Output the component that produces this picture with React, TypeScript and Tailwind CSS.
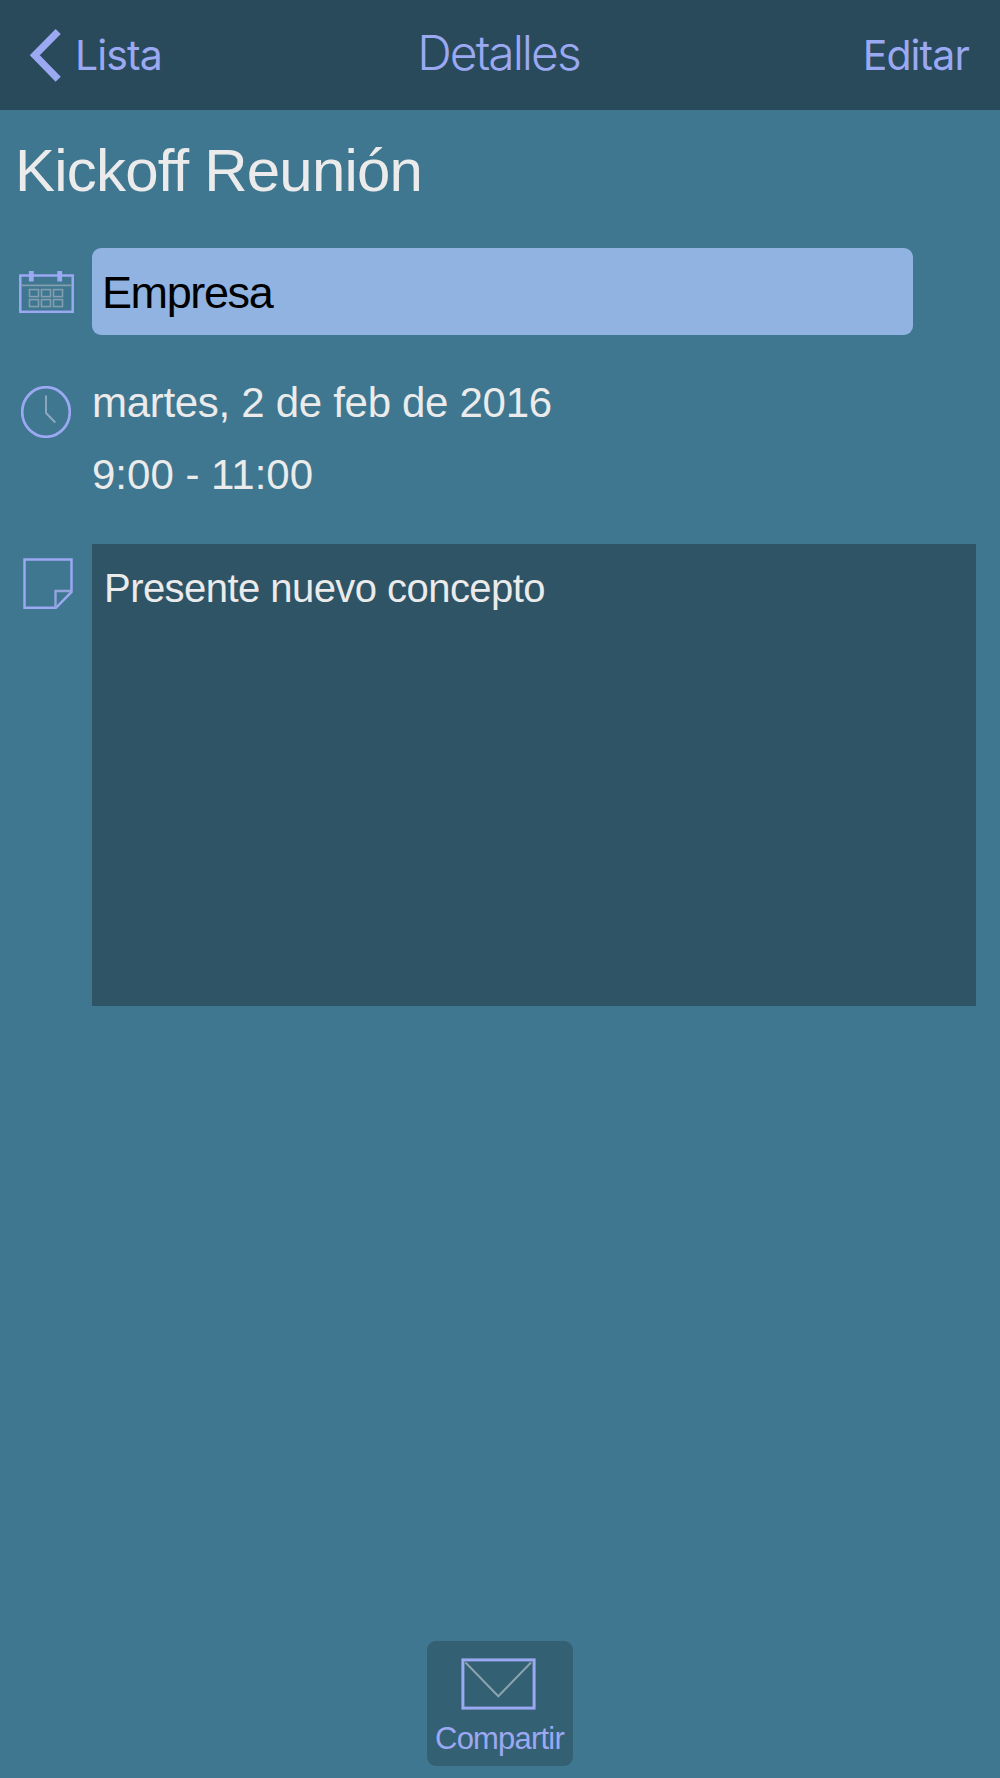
import type { ReactNode } from 'react';

const ICON_COLOR = '#9ba8f2';
const THIN_COLOR = '#819fae';

function BackIcon() {
    return (
        <svg width="31" height="53" viewBox="0 0 31 53" fill="none">
            <path d="M28.2 2.5 4.8 26.3 28.2 50.2" stroke={ICON_COLOR} strokeWidth="7.2" />
        </svg>
    );
}

function CalendarIcon() {
    return (
        <svg width="55" height="43" viewBox="0 0 55 43" fill="none">
            <rect x="1.3" y="4.5" width="52.4" height="36.3" stroke={ICON_COLOR} strokeWidth="2.5" />
            <path d="M2.5 14.3H52.5" stroke={THIN_COLOR} strokeWidth="1.8" />
            <path d="M12.3 0V10.5M40.7 0V10.5" stroke={ICON_COLOR} strokeWidth="4.8" />
            {[10.5, 22.5, 34.5].map((x) => (
                <g key={x} stroke={THIN_COLOR} strokeWidth="1.6">
                    <rect x={x} y="18.6" width="9" height="7" />
                    <rect x={x} y="28.6" width="9" height="7" />
                </g>
            ))}
        </svg>
    );
}

function ClockIcon() {
    return (
        <svg width="50" height="52" viewBox="0 0 50 52" fill="none">
            <ellipse cx="25" cy="26" rx="23.8" ry="24.8" stroke={ICON_COLOR} strokeWidth="2.7" />
            <path d="M25 9.5V27L34.3 36.5" stroke="#8fa9c2" strokeWidth="1.9" />
        </svg>
    );
}

function NoteIcon() {
    return (
        <svg width="50" height="52" viewBox="0 0 50 52" fill="none" stroke={ICON_COLOR} strokeWidth="2.5">
            <path d="M1.5 1.5H48.5V34L33 49.8H1.5Z" />
            <path d="M48.5 33H32.5V49.8" stroke="#93a5dd" strokeWidth="2.4" />
        </svg>
    );
}

function MailIcon() {
    return (
        <svg width="75" height="52" viewBox="0 0 75 52" fill="none">
            <path d="M4.5 4.5 37.3 38.3 70 4.5" stroke="#8ba4ae" strokeWidth="2" />
            <rect x="1.9" y="1.9" width="71.2" height="48.2" stroke={ICON_COLOR} strokeWidth="3" />
        </svg>
    );
}

function Row({ icon, children }: { icon: ReactNode; children: ReactNode }) {
    return (
        <div className="flex items-start">
            <div className="flex w-[92px] shrink-0">{icon}</div>
            {children}
        </div>
    );
}

export default function App() {
    return (
        <div className="flex h-[1778px] w-[1000px] flex-col bg-[#3f7690] font-['Liberation_Sans',sans-serif] text-[#ebebeb]">
            <header className="grid h-[110px] shrink-0 grid-cols-3 items-center bg-[#284a5a] px-[30px] text-[#9ba8f2]">
                <button className="flex items-center gap-[14px] font-['Inter',sans-serif] text-[41px] leading-none tracking-[-0.9px]">
                    <BackIcon />
                    <span>Lista</span>
                </button>
                <h1 className="pr-[3px] pb-[5px] text-center font-['Inter',sans-serif] text-[48px] leading-none font-light tracking-[-2px]">
                    Detalles
                </h1>
                <button className="pr-px text-right font-['Inter',sans-serif] text-[41px] leading-none tracking-[-0.9px]">
                    Editar
                </button>
            </header>

            <main className="flex flex-1 flex-col">
                <h2 className="mt-[27px] pl-[15px] text-[60px] leading-[68px] tracking-[-0.8px] whitespace-nowrap">
                    Kickoff Reunión
                </h2>

                <div className="mt-[43px]">
                    <Row icon={<div className="mt-[23px] ml-[19px]"><CalendarIcon /></div>}>
                        <div className="flex h-[87px] w-[821px] items-center rounded-[9px] bg-[#90b3e1] pt-[2px] pl-[10px] text-[45px] leading-none tracking-[-1.4px] text-black">
                            Empresa
                        </div>
                    </Row>
                </div>

                <div className="mt-[32px]">
                    <Row icon={<div className="mt-[19px] ml-[21px]"><ClockIcon /></div>}>
                        <div className="text-[42px] leading-[72px] whitespace-nowrap">
                            <p className="tracking-[-0.3px]">martes, 2 de feb de 2016</p>
                            <p>9:00 - 11:00</p>
                        </div>
                    </Row>
                </div>

                <div className="mt-[33px]">
                    <Row icon={<div className="mt-[14px] ml-[23px]"><NoteIcon /></div>}>
                        <div className="h-[462px] w-[884px] bg-[#2e5466] pt-[21px] pl-[12px] text-[40px] leading-[46px] tracking-[-0.55px]">
                            Presente nuevo concepto
                        </div>
                    </Row>
                </div>
            </main>

            <footer className="flex justify-center pb-[12px]">
                <button className="flex h-[125px] w-[146px] flex-col items-center rounded-[9px] bg-[#346073] pt-[17px] pr-[3px] text-[#9ba8f2]">
                    <MailIcon />
                    <span className="mt-[12px] pl-[2px] text-[31px] leading-[34px] tracking-[-0.8px]">Compartir</span>
                </button>
            </footer>
        </div>
    );
}
